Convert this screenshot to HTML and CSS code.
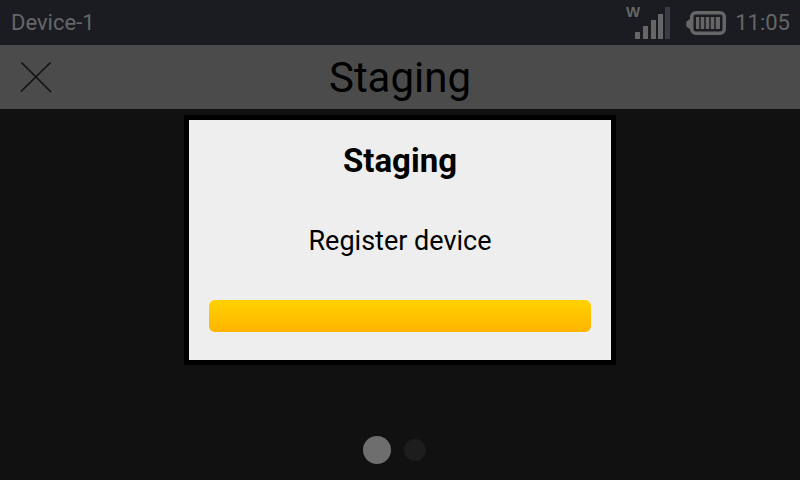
FILE: index.html
```html
<!DOCTYPE html>
<html lang="en">
<head>
    <meta charset="UTF-8">
    <meta name="viewport" content="width=device-width, initial-scale=1.0">
    <title>Staging</title>
    <link rel="stylesheet" href="styles.css">
</head>
<body>
    <div class="status-bar">
        <span class="device-name">Device-1</span>
        <div class="status-icons">
            <svg class="signal" width="46" height="39" viewBox="0 0 46 39">
                <text x="0" y="16" class="signal-type">W</text>
                <rect x="9" y="31" width="5" height="7" fill="#666"/>
                <rect x="17" y="25" width="5" height="13" fill="#666"/>
                <rect x="25" y="19" width="5" height="19" fill="#666"/>
                <rect x="32" y="13" width="5" height="25" fill="#666"/>
                <rect x="39" y="6" width="5" height="32" fill="#3a3d45"/>
            </svg>
            <svg class="battery" width="40" height="24" viewBox="0 0 40 24">
                <path d="M5 8 L1 11 V15 L5 18" fill="#666" stroke="#666" stroke-width="1.5"/>
                <rect x="5.75" y="1.75" width="32.5" height="20.5" rx="4" fill="none" stroke="#666" stroke-width="3.5"/>
                <rect x="10" y="6" width="24" height="12" fill="#666"/>
                <path d="M14 6 V18 M19 6 V18 M24 6 V18 M29 6 V18" stroke="#1b1c22" stroke-width="1.5"/>
            </svg>
            <span class="clock">11:05</span>
        </div>
    </div>

    <div class="title-bar">
        <svg class="close-icon" width="32" height="32" viewBox="0 0 32 32">
            <path d="M1.5 1.5 L31 31 M30.5 1.5 L1 30.5" stroke="#111" stroke-width="1.6" fill="none"/>
        </svg>
        <h1>Staging</h1>
    </div>

    <div class="content">
        <div class="dialog">
            <h2>Staging</h2>
            <p>Register device</p>
            <div class="progress"></div>
        </div>
        <div class="pager">
            <span class="dot active"></span>
            <span class="dot"></span>
        </div>
    </div>
</body>
</html>
```

FILE: styles.css
```css
html, body {
    margin: 0;
    height: 100%;
}
body {
    width: 800px;
    height: 480px;
    overflow: hidden;
    display: flex;
    flex-direction: column;
    font-family: Roboto, Arial, sans-serif;
    background-color: #111;
}
.status-bar {
    height: 45px;
    flex: none;
    display: flex;
    align-items: center;
    justify-content: space-between;
    padding: 0 10px 0 11px;
    background-color: #1b1c22;
    color: #666;
    font-size: 22px;
}
.status-icons {
    align-self: stretch;
    display: flex;
    align-items: center;
}
.signal {
    align-self: flex-start;
    margin-top: 1px;
    margin-right: 14px;
}
.signal-type {
    font-family: "Liberation Sans", Arial, sans-serif;
    font-size: 15px;
    font-weight: bold;
    fill: #666;
}
.battery {
    margin-right: 9px;
    margin-top: 1px;
}
.title-bar {
    height: 64px;
    flex: none;
    display: flex;
    align-items: center;
    justify-content: center;
    position: relative;
    background-color: #4b4b4b;
}
.title-bar h1 {
    margin: 0;
    font-size: 42px;
    font-weight: 400;
    color: #000;
}
.close-icon {
    position: absolute;
    left: 20px;
    top: 16px;
}
.content {
    flex: 1;
    display: flex;
    flex-direction: column;
    align-items: center;
    padding-top: 6px;
}
.dialog {
    width: 422px;
    height: 240px;
    border: 5px solid #000;
    background-color: #eee;
    display: flex;
    flex-direction: column;
    align-items: center;
    color: #000;
}
.dialog h2 {
    margin: 20px 0 0;
    font-size: 33px;
    line-height: 42px;
    font-weight: 700;
}
.dialog p {
    margin: 41px 0 0;
    font-size: 27px;
    line-height: 36px;
}
.progress {
    width: 382px;
    height: 32px;
    margin-top: 41px;
    border-radius: 6px;
    background: linear-gradient(#ffd200, #ffb400);
}
.pager {
    display: flex;
    align-items: center;
    gap: 13px;
    margin-top: 71px;
    padding-right: 11px;
}
.dot {
    width: 22px;
    height: 22px;
    border-radius: 50%;
    background-color: #1d1d1d;
}
.dot.active {
    width: 28px;
    height: 28px;
    background-color: #6e6e6e;
}
```
